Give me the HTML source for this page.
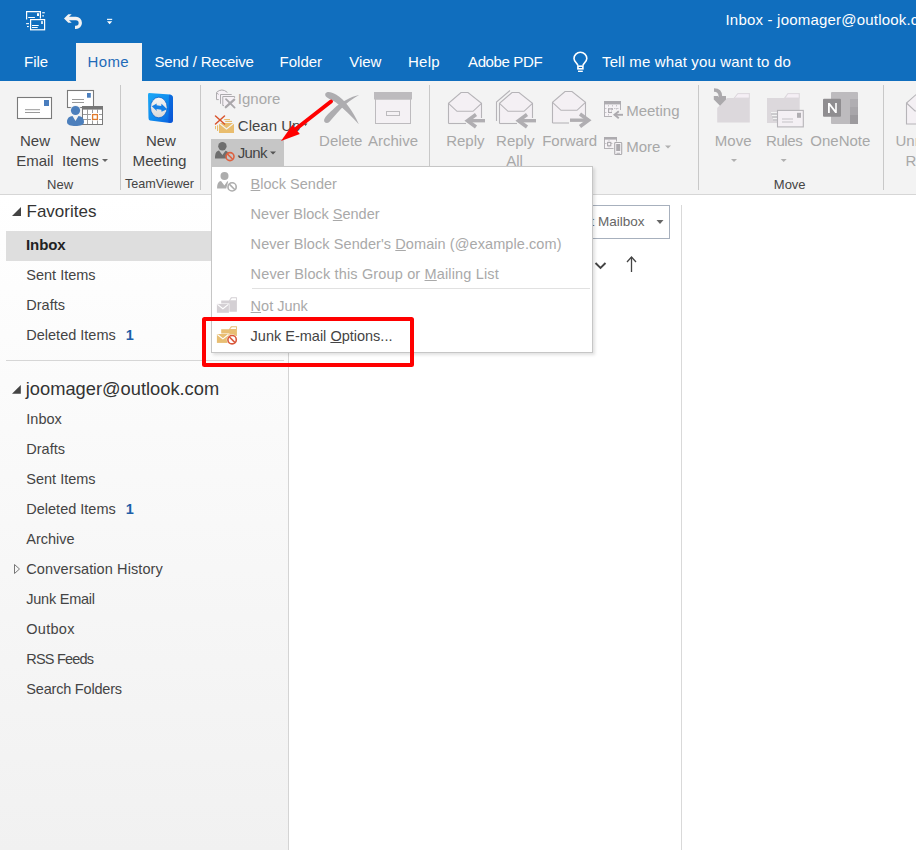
<!DOCTYPE html>
<html><head><meta charset="utf-8">
<style>
*{margin:0;padding:0;box-sizing:border-box}
html,body{width:916px;height:850px;overflow:hidden;background:#fff;font-family:"Liberation Sans",sans-serif}
.a{position:absolute}
.t{position:absolute;white-space:nowrap;line-height:1}
#title{left:0;top:0;width:916px;height:81px;background:#106EBE}
.tab{color:#fff;font-size:15px}
.rb{font-size:15px;color:#444}
.dis{color:#A8A8A8}
.sep{position:absolute;width:1px;background:#C8C8C8}
.side{font-size:14.5px;color:#444}
.menu{font-size:14.5px;color:#A9A9A9}
u{text-decoration:underline;text-decoration-thickness:1px;text-underline-offset:1px}
</style></head><body>
<div id="title" class="a"></div>
<!-- Home tab -->
<div class="a" style="left:76px;top:43px;width:66px;height:38px;background:#F3F3F3"></div>
<div class="t" style="left:725.5px;top:12px;font-size:15px;color:#fff;letter-spacing:0.2px">Inbox - joomager@outlook.com</div>
<div class="t tab" style="left:24px;top:54.2px">File</div>
<div class="t tab" style="left:87.6px;top:54.2px;color:#1F6BB8;letter-spacing:0.35px">Home</div>
<div class="t tab" style="left:154.4px;top:54.2px;letter-spacing:-0.17px">Send / Receive</div>
<div class="t tab" style="left:279.6px;top:54.2px">Folder</div>
<div class="t tab" style="left:349.2px;top:54.2px">View</div>
<div class="t tab" style="left:408px;top:54.2px;letter-spacing:0.25px">Help</div>
<div class="t tab" style="left:468px;top:54.2px;letter-spacing:-0.37px">Adobe PDF</div>
<div class="t tab" style="left:602px;top:54.2px;letter-spacing:0.14px">Tell me what you want to do</div>

<!-- Ribbon -->
<div class="a" style="left:0;top:81px;width:916px;height:114px;background:#F3F3F3;border-bottom:1px solid #D6D6D6"></div>
<div class="sep" style="left:120px;top:85px;height:105px"></div>
<div class="sep" style="left:200px;top:85px;height:105px"></div>
<div class="sep" style="left:429px;top:85px;height:105px"></div>
<div class="sep" style="left:698px;top:85px;height:105px"></div>
<div class="sep" style="left:883px;top:85px;height:105px"></div>

<div class="t rb" style="left:20.0px;top:133.3px">New</div>
<div class="t rb" style="left:16.2px;top:153.0px">Email</div>
<div class="t rb" style="left:69.9px;top:133.3px">New</div>
<div class="t rb" style="left:62.0px;top:153.0px">Items</div>
<div class="t rb" style="left:47.1px;top:177.6px;font-size:13px">New</div>
<div class="t rb" style="left:145.9px;top:133.3px">New</div>
<div class="t rb" style="left:132.5px;top:152.8px;font-size:15.2px">Meeting</div>
<div class="t rb" style="left:125.0px;top:177.6px;font-size:12.6px">TeamViewer</div>

<div class="t rb dis" style="left:237.8px;top:90.8px">Ignore</div>
<div class="t rb" style="left:237.8px;top:117.9px">Clean Up</div>
<div class="a" style="left:211px;top:139px;width:73px;height:27px;background:#C6C6C6"></div>
<div class="t rb" style="left:237.8px;top:145.0px;letter-spacing:-0.7px">Junk</div>
<div class="t rb dis" style="left:319.1px;top:133.3px">Delete</div>
<div class="t rb dis" style="left:368.0px;top:133.3px">Archive</div>
<div class="t rb dis" style="left:446.2px;top:133.3px">Reply</div>
<div class="t rb dis" style="left:496.1px;top:133.3px">Reply</div>
<div class="t rb dis" style="left:506.2px;top:153.0px">All</div>
<div class="t rb dis" style="left:542.2px;top:133.3px">Forward</div>
<div class="t rb dis" style="left:626.2px;top:102.6px">Meeting</div>
<div class="t rb dis" style="left:626.2px;top:138.7px">More</div>
<div class="t rb dis" style="left:714.8px;top:133.3px">Move</div>
<div class="t rb dis" style="left:766.0px;top:133.3px;letter-spacing:-0.4px">Rules</div>
<div class="t rb dis" style="left:810.3px;top:133.3px">OneNote</div>
<div class="t rb" style="left:773.8px;top:177.7px;font-size:13px">Move</div>
<div class="t rb dis" style="left:895.5px;top:133.3px">Unread/</div>
<div class="t rb dis" style="left:905.5px;top:153.3px">Read</div>


<!-- ICONS -->
<svg class="a" style="left:0;top:0" width="916" height="200">
 <!-- QAT send/receive -->
 <g fill="none" stroke="#fff" stroke-width="1.2">
  <polyline points="26.6,19.5 26.6,11.6 40.4,11.6 40.4,18.6"/>
  <rect x="30.6" y="19.6" width="14" height="10.2"/>
 </g>
 <g fill="#fff">
  <rect x="37" y="13.2" width="2" height="2.8"/>
  <rect x="28.2" y="17" width="6.7" height="1"/>
  <rect x="42.2" y="12.2" width="2.6" height="1.1"/>
  <rect x="42.2" y="15.3" width="1.8" height="1.1"/>
  <rect x="41.2" y="21.1" width="1.6" height="2.9"/>
  <rect x="32" y="25" width="6.7" height="1"/>
  <rect x="32" y="27" width="5.7" height="1"/>
  <rect x="26.1" y="23.1" width="2.9" height="1.1"/>
  <rect x="27" y="26" width="1.8" height="1.1"/>
 </g>
 <!-- undo -->
 <path d="M68.5,18.5 H75.9 A4.4,4.4 0 0 1 75.9,27.3 H75" fill="none" stroke="#F2F2F2" stroke-width="3.3"/>
 <polygon points="64,18.5 68.3,14.2 71.7,14.2 68.9,17 70,17 70,20 68.9,20 71.7,22.8 68.3,22.8" fill="#F2F2F2"/>
 <!-- customize -->
 <rect x="107" y="18.8" width="5.2" height="1.1" fill="#fff"/>
 <polygon points="107,21.3 112.2,21.3 109.6,24.3" fill="#fff"/>
 <!-- lightbulb -->
 <g fill="none" stroke="#fff" stroke-width="1.6">
  <path d="M577.9,65.6 C577.6,63.2 574,61.8 574,58.6 A6.4,6.4 0 0 1 586.8,58.6 C586.8,61.8 583.2,63.2 582.9,65.6"/>
 </g>
 <rect x="577.1" y="65.4" width="6.6" height="4.2" fill="#fff"/>
 <rect x="578.8" y="67" width="3.3" height="1" fill="#106EBE"/>
 <rect x="578" y="70.6" width="4.8" height="1.4" fill="#fff"/>

 <!-- New Email -->
 <rect x="17.5" y="97.5" width="34" height="21" fill="#fff" stroke="#7A7A7A" stroke-width="1.1"/>
 <rect x="44" y="100" width="5" height="6" fill="#4A7EBE"/>
 <rect x="25" y="109.2" width="15" height="1" fill="#9A9A9A"/>
 <rect x="25" y="112" width="15" height="1" fill="#9A9A9A"/>
 <!-- New Items -->
 <rect x="67.5" y="90.5" width="26" height="17" fill="#fff" stroke="#7A7A7A" stroke-width="1.1"/>
 <rect x="87" y="93" width="3.8" height="4.7" fill="#4A7EBE"/>
 <rect x="72" y="99" width="12" height="1" fill="#9A9A9A"/>
 <rect x="72" y="102" width="12" height="1" fill="#9A9A9A"/>
 <rect x="82.5" y="106.5" width="20" height="18" fill="#fff" stroke="#7A7A7A" stroke-width="1"/>
 <rect x="82" y="106" width="21" height="3.6" fill="#777"/>
 <g stroke="#9C9C9C" stroke-width="1">
  <line x1="87.5" y1="109" x2="87.5" y2="124"/><line x1="92.5" y1="109" x2="92.5" y2="113"/><line x1="92.5" y1="120.5" x2="92.5" y2="124"/><line x1="97.5" y1="109" x2="97.5" y2="113"/><line x1="97.5" y1="120.5" x2="97.5" y2="124"/>
  <line x1="83" y1="114.5" x2="91" y2="114.5"/><line x1="99" y1="114.5" x2="102" y2="114.5"/><line x1="83" y1="119.5" x2="91" y2="119.5"/><line x1="99" y1="119.5" x2="102" y2="119.5"/>
 </g>
 <rect x="92.6" y="114.6" width="4.8" height="4.8" fill="#fff" stroke="#E07B2C" stroke-width="1.3"/>
 <circle cx="75.5" cy="110.5" r="5.6" fill="#F3F3F3"/>
 <circle cx="75.5" cy="110.5" r="4.6" fill="#4C7FBC"/>
 <path d="M67,122 C67,118 69.5,116.3 72.5,116 L75.5,121 L78.5,116 C81.5,116.3 84,118 84,122 C84,125 80,126 75.5,126 C71,126 67,125 67,122 Z" fill="#4C7FBC"/>
 <!-- TeamViewer -->
 <defs>
  <linearGradient id="tvg" x1="0" y1="0" x2="1" y2="1"><stop offset="0" stop-color="#1AA8F6"/><stop offset="0.6" stop-color="#0E86EC"/><stop offset="1" stop-color="#0A5ADC"/></linearGradient>
  <linearGradient id="tvc" x1="0" y1="0" x2="0" y2="1"><stop offset="0" stop-color="#F6F6F6"/><stop offset="1" stop-color="#D9D9D9"/></linearGradient>
 </defs>
 <path d="M149,93 L170,94.5 Q173,95 173,98 L173,120 Q173,123 170,123 L150,120.5 Q148.5,120 148.5,118 L148,95 Q148,93 149,93 Z" fill="url(#tvg)"/>
 <path d="M169.5,94.5 Q173,95 173,98 L173,120 Q173,123 170,123 L168.5,122.5 L169,96 Z" fill="#0A4FD0" opacity="0.55"/>
 <ellipse cx="158.8" cy="107.5" rx="8.3" ry="10.3" fill="url(#tvc)" stroke="#0B5CC8" stroke-width="0.7"/>
 <polygon points="151.8,106.3 156.8,103.4 156.5,105.3 161.2,106 161.5,103.8 167.2,109.2 161.5,111.8 161.3,109.8 156.5,109 156.8,111" fill="#1680E6"/>
  <!-- Ignore -->
 <path d="M216.5,99.6 V92.4 Q221.8,87.6 227.4,92.4 L227.4,99.6 Z" fill="#F6F1F6"/>
 <rect x="220.5" y="94.5" width="11.2" height="9.3" fill="#F6F1F6"/>
 <rect x="222.8" y="96.5" width="11.8" height="9.2" fill="#F6F1F6"/>
 <g fill="none" stroke="#ADABAE" stroke-width="1">
  <path d="M218.8,99.6 H216.5 V92.4 Q221.8,87.6 227.4,92.4"/>
  <path d="M217.3,93 L218.4,94.6"/>
  <path d="M220.5,103.8 V94.5 H231.7"/>
  <path d="M224,105.6 H222.8 V96.5 H234.6 V97.8"/>
 </g>
 <path d="M226,99.2 L234.6,107.6" stroke="#A9A7AA" stroke-width="1.8" stroke-linecap="round"/>
 <path d="M234.2,99.7 L225.8,107.2" stroke="#A9A7AA" stroke-width="2.3" stroke-linecap="round"/>
 <!-- Clean Up -->
 <rect x="219" y="123" width="15" height="10" fill="#E9BD6E"/>
 <polyline points="219,123 226.5,129 234,123" fill="none" stroke="#F3F3F3" stroke-width="1.1"/>
 <rect x="224.2" y="119" width="5.8" height="1.1" fill="#E9BD6E"/>
 <rect x="225.2" y="120.9" width="6.8" height="1.1" fill="#E9BD6E"/>
 <rect x="215" y="126" width="1" height="3.2" fill="#E9BD6E"/>
 <rect x="217" y="125.3" width="1.1" height="5.7" fill="#E9BD6E"/>
 <g stroke="#D9532C" stroke-width="1.5" stroke-linecap="round">
  <line x1="215.5" y1="116" x2="224.5" y2="124"/><line x1="224.5" y1="116" x2="215.5" y2="124"/>
 </g>
 <!-- Junk -->
 <circle cx="222.4" cy="146.2" r="4.2" fill="#6E6E6E"/>
 <path d="M215,158.5 C215,153 216.5,151 219,150.6 L222.4,155 L225.5,150.8 C226.8,151 227.8,151.8 228,152.5 L226,158.5 Z" fill="#6E6E6E"/>
 <circle cx="230" cy="156.6" r="4" fill="none" stroke="#DE6240" stroke-width="1.6"/>
 <line x1="227.3" y1="153.9" x2="232.7" y2="159.3" stroke="#DE6240" stroke-width="1.6"/>
 <!-- arrows -->
 <polygon points="102,159 108,159 105,162" fill="#666"/>
 <polygon points="303.5,123.5 307.5,123.5 305.5,126" fill="#555"/>
 <polygon points="270,151.5 276,151.5 273,154.5" fill="#555"/>
 <polygon points="665,145.5 671,145.5 668,148.5" fill="#B0B0B0"/>
 <polygon points="731,159 737,159 734,162" fill="#B0B0B0"/>
 <polygon points="780.7,159 786.7,159 783.7,162" fill="#B0B0B0"/>

 <!-- Delete -->
 <path d="M325.3,93.8 C326.5,91 331,91.5 336,94.5 C345,100 353,111 358.8,124.2 C351,115.5 343,108 336,102.5 C331,99.2 324,97.5 325.3,93.8 Z" fill="#AEADB0"/>
 <path d="M359.2,95 C351,96.5 341,102 334,108.5 C330,112.2 325.5,116 324.2,119.5 C323.2,122.8 327.2,124.2 329.3,122 C334,116.5 339.5,110 346,104 C350,100.5 354.5,97.5 359.2,95 Z" fill="#AEADB0"/>
 <!-- Archive -->
 <rect x="375.5" y="99" width="35" height="24.5" fill="#F4F1F4" stroke="#BDBBBE" stroke-width="1"/>
 <rect x="374" y="92" width="38" height="7.5" fill="#BDBBBE"/>
 <rect x="386.5" y="111.5" width="13" height="4" fill="none" stroke="#BDBBBE" stroke-width="1"/>

 <!-- Reply -->
 <g fill="#F4F0F4" stroke="#B6B4B8" stroke-width="1.1">
  <path d="M448.5,123.5 V103.3 L461,92.5 H468 L481.5,103.3 V118"/>
  <path d="M448.5,123.5 H466"/>
  <path d="M448.5,103.3 L457,111.3 H473 L481.5,103.3" fill="none"/>
 </g>
 <g fill="none" stroke="#B0AEB2" stroke-linecap="butt">
  <polyline points="476,114.5 467.5,120.7 476,127" stroke-width="3.6"/>
  <line x1="467" y1="120.7" x2="485" y2="120.7" stroke-width="3.4"/>
 </g>
 <!-- Reply All -->
 <g fill="#F4F0F4" stroke="#B6B4B8" stroke-width="1.1">
  <path d="M496.5,121 V102 L510,90.5" fill="none"/>
  <path d="M499.5,123.5 V103.3 L512,92.5 H519 L532.5,103.3 V118"/>
  <path d="M499.5,123.5 H517"/>
  <path d="M499.5,103.3 L508,111.3 H524 L532.5,103.3" fill="none"/>
 </g>
 <g fill="none" stroke="#B0AEB2">
  <polyline points="527,114.5 518.5,120.7 527,127" stroke-width="3.6"/>
  <line x1="518" y1="120.7" x2="536" y2="120.7" stroke-width="3.4"/>
 </g>
 <!-- Forward -->
 <g fill="#F4F0F4" stroke="#B6B4B8" stroke-width="1.1">
  <path d="M552.5,123 V102.3 L565,91.5 H572 L585.5,102.3 V117"/>
  <path d="M552.5,123 H569"/>
  <path d="M552.5,102.3 L561,110.3 H577 L585.5,102.3" fill="none"/>
 </g>
 <g fill="none" stroke="#B0AEB2">
  <polyline points="580,114 588.5,120.2 580,126.5" stroke-width="3.6"/>
  <line x1="570" y1="120.2" x2="589" y2="120.2" stroke-width="3.4"/>
 </g>
 <!-- Meeting small -->
 <rect x="604.5" y="101.5" width="16" height="15" fill="#F6F3F6" stroke="#B4B2B6" stroke-width="1"/>
 <rect x="604" y="101" width="17" height="3.4" fill="#ADABAF"/>
 <g stroke="#C9C7CB" stroke-width="1" stroke-dasharray="1.5 1.5" fill="none">
  <line x1="608.5" y1="105" x2="608.5" y2="116"/><line x1="612.5" y1="105" x2="612.5" y2="116"/><line x1="616.5" y1="105" x2="616.5" y2="112"/>
  <line x1="605" y1="108.5" x2="620" y2="108.5"/><line x1="605" y1="112.5" x2="613" y2="112.5"/>
 </g>
 <rect x="608.6" y="108.9" width="3.6" height="3.6" fill="#F6F3F6" stroke="#ABA9AD" stroke-width="1.1"/>
 <rect x="612" y="110" width="11" height="10" fill="#F3F3F3"/>
 <polyline points="618.8,111.3 614.5,114.8 618.8,118.3" fill="none" stroke="#ACAAAE" stroke-width="1.9"/>
 <line x1="614.5" y1="114.8" x2="623" y2="114.8" stroke="#ACAAAE" stroke-width="1.9"/>
 <!-- More small -->
 <rect x="604.5" y="137.5" width="12" height="11" fill="#F6F3F6" stroke="#B4B2B6" stroke-width="1"/>
 <rect x="604" y="137" width="13" height="2.6" fill="#ADABAF"/>
 <g stroke="#C9C7CB" stroke-width="1" stroke-dasharray="1.5 1.5" fill="none">
  <line x1="605" y1="143.5" x2="616" y2="143.5"/><line x1="609" y1="140" x2="609" y2="148"/>
 </g>
 <rect x="607.6" y="142.4" width="3.2" height="3.4" fill="#F6F3F6" stroke="#ABA9AD" stroke-width="1.1"/>
 <rect x="613.5" y="141.5" width="9" height="14" fill="#F3F3F3"/>
 <rect x="614.7" y="142.5" width="7" height="12" rx="0.8" fill="#F6F3F6" stroke="#ACAAAE" stroke-width="1.1"/>
 <rect x="616.2" y="144" width="4" height="7" fill="#ACAAAE"/>
 <rect x="616.5" y="152.8" width="3.5" height="0.9" fill="#ACAAAE"/>
 <!-- Move -->
 <path d="M717.2,108 L727,98.1 H733.7 L737.8,93.1 H749.8 V122.6 H717.2 Z" fill="#DCD8DC"/>
 <path d="M734.3,98.1 L738,93.6 H749.3 V98.1 Z" fill="#F5EFF5" stroke="#DCD8DC" stroke-width="0.9"/>
 <path d="M714,90 C718.5,90 720.4,92.5 720.4,96.5 V100" fill="none" stroke="#ABA9AC" stroke-width="3.6"/>
 <polygon points="713.8,96 717.8,96 720.2,98.8 722.2,96 726,96 726,99.5 720,105.8 713.8,99.5" fill="#ABA9AC"/>
 <!-- Rules -->
 <path d="M767,98 H784 L787.8,93.1 H799.7 V123 H767 Z" fill="#DCD8DC"/>
 <path d="M785,98 L788,93.6 H799.2 V98 Z" fill="#F5EFF5" stroke="#DCD8DC" stroke-width="0.9"/>
 <g fill="#F3F3F3"><rect x="771" y="112" width="6" height="1.2"/><rect x="772" y="115" width="5" height="1.2"/><rect x="773" y="118" width="4" height="1.2"/></g>
 <g fill="#C8C6CA"><rect x="771" y="113.2" width="6" height="1.6"/><rect x="772" y="116.2" width="5" height="1.6"/><rect x="773" y="119.2" width="4" height="1.6"/></g>
 <rect x="777.5" y="110.4" width="25.8" height="16.5" fill="#F4F0F4" stroke="#B6B4B8" stroke-width="1.1"/>
 <rect x="797" y="112.8" width="4" height="5" fill="#B0AEB2"/>
 <rect x="782" y="118.5" width="11" height="1" fill="#C4C2C6"/>
 <rect x="782" y="121.5" width="11" height="1" fill="#C4C2C6"/>
 <!-- OneNote -->
 <rect x="831" y="92" width="27" height="32" rx="1" fill="#BDBBBE"/>
 <rect x="850" y="99" width="8" height="8" fill="#B0AEB2"/>
 <rect x="850" y="107" width="8" height="8" fill="#A8A6AA"/>
 <rect x="850" y="115" width="8" height="9" fill="#9C9A9E"/>
 <rect x="823" y="98.8" width="18" height="18" rx="1" fill="#8F8D90"/>
 <path d="M828,113 V103 H829.8 L835.2,110 V103 H836.8 V113 H835.2 L829.8,106 V113 Z" fill="#fff"/>
 <!-- Unread partial -->
 <g fill="#F4F0F4" stroke="#B6B4B8" stroke-width="1.1">
  <path d="M906.5,124 V103 L919,92 H930 V124 Z"/>
  <path d="M906.5,103 L915,111 H930" fill="none"/>
 </g>
</svg>

<!-- Sidebar -->
<div class="a" style="left:0;top:195px;width:289px;height:655px;background:linear-gradient(#fff,#F1F1F1);border-right:1px solid #D4D4D4"></div>
<div class="a" style="left:6px;top:231px;width:282px;height:30px;background:#DEDEDE"></div>
<div class="t" style="left:26.5px;top:203.2px;font-size:17px;color:#333">Favorites</div>
<div class="t side" style="left:26px;top:237.2px;font-weight:bold;color:#222;font-size:15px;letter-spacing:-0.1px">Inbox</div>
<div class="t side" style="left:26.3px;top:267.7px">Sent Items</div>
<div class="t side" style="left:26.3px;top:297.7px">Drafts</div>
<div class="t side" style="left:26.3px;top:327.7px">Deleted Items <b style="color:#1E5FA8;margin-left:6px">1</b></div>
<div class="a" style="left:6px;top:360px;width:278px;height:1px;background:#D6D6D6"></div>
<div class="t" style="left:25.8px;top:379.8px;font-size:18.3px;color:#333">joomager@outlook.com</div>
<div class="t side" style="left:26.3px;top:411.7px">Inbox</div>
<div class="t side" style="left:26.3px;top:441.7px">Drafts</div>
<div class="t side" style="left:26.3px;top:471.7px">Sent Items</div>
<div class="t side" style="left:26.3px;top:501.7px">Deleted Items <b style="color:#1E5FA8;margin-left:6px">1</b></div>
<div class="t side" style="left:26.3px;top:531.7px">Archive</div>
<div class="t side" style="left:26.3px;top:561.7px;letter-spacing:0.1px">Conversation History</div>
<div class="t side" style="left:26.3px;top:591.7px;letter-spacing:-0.25px">Junk Email</div>
<div class="t side" style="left:26.3px;top:621.7px;letter-spacing:0.27px">Outbox</div>
<div class="t side" style="left:26.3px;top:651.7px;letter-spacing:-0.8px">RSS Feeds</div>
<div class="t side" style="left:26.3px;top:681.7px;letter-spacing:-0.2px">Search Folders</div>
<svg class="a" style="left:0;top:194px" width="30" height="400">
 <polygon points="12,22 21,13 21,22" fill="#444"/>
 <polygon points="12,199.8 20.8,191 20.8,199.8" fill="#444"/>
 <polygon points="14.5,370.5 19.5,375 14.5,379.5" fill="none" stroke="#777" stroke-width="1"/>
</svg>

<!-- middle -->
<div class="a" style="left:681px;top:205px;width:1px;height:645px;background:#D9D9D9"></div>
<div class="a" style="left:480px;top:205px;width:190px;height:34px;border:1px solid #A7B0BD;background:#fff"></div>
<div class="t" style="right:271.4px;top:215.2px;font-size:13.5px;color:#666">Current Mailbox</div>
<svg class="a" style="left:585px;top:195px" width="90" height="80">
 <polygon points="71.5,25 78.5,25 75,29" fill="#666"/>
 <polyline points="10.5,68 15.5,73 20.5,68" fill="none" stroke="#444" stroke-width="1.9"/>
 <line x1="46.5" y1="62" x2="46.5" y2="77" stroke="#444" stroke-width="1.3"/>
 <polyline points="42,67 46.5,62 51,67" fill="none" stroke="#444" stroke-width="1.3"/>
</svg>

<!-- menu -->
<div class="a" style="left:211px;top:166px;width:382px;height:187px;background:#fff;border:1px solid #C6C6C6;box-shadow:2px 2px 3px rgba(0,0,0,0.12)"></div>
<div class="t menu" style="left:250.6px;top:176.8px"><u>B</u>lock Sender</div>
<div class="t menu" style="left:250.6px;top:207px">Never Block <u>S</u>ender</div>
<div class="t menu" style="left:250.6px;top:236.7px;letter-spacing:0.08px">Never Block Sender's <u>D</u>omain (@example.com)</div>
<div class="t menu" style="left:250.6px;top:266.7px;letter-spacing:0.15px">Never Block this Group or <u>M</u>ailing List</div>
<div class="a" style="left:252px;top:288px;width:338px;height:1px;background:#E1E1E1"></div>
<div class="t menu" style="left:250.6px;top:298.7px"><u>N</u>ot Junk</div>
<div class="t menu" style="left:250.6px;top:329.2px;color:#444">Junk E-mail <u>O</u>ptions...</div>


<svg class="a" style="left:0;top:0" width="600" height="360">
 <circle cx="224.5" cy="175.9" r="4" fill="#ADADAD"/>
 <path d="M217.1,188.5 C217.1,183.5 218.5,181.3 221,181 L224.4,185.5 L227.3,181.2 L228.2,181.6 L226.2,188.5 Z" fill="#ADADAD"/>
 <circle cx="232.1" cy="186.9" r="4.1" fill="#fff" stroke="#ADADAD" stroke-width="1.6"/>
 <line x1="229.3" y1="184.1" x2="234.9" y2="189.7" stroke="#ADADAD" stroke-width="1.6"/>
 <!-- not junk -->
 <path d="M221.2,300.5 H229 L231,297.2 H236.9 V311.8 H221.2 Z" fill="#D4D0D4"/>
 <path d="M230.2,300.2 L231.8,298.2 H236 V300.2 Z" fill="#fff"/>
 <rect x="216.4" y="303.4" width="13" height="9.9" fill="#fff"/>
 <rect x="216.9" y="303.9" width="12" height="8.9" fill="#D4D0D4"/>
 <polyline points="217.4,304.4 222.9,308.8 228.4,304.4" fill="none" stroke="#fff" stroke-width="1.1"/>
 <!-- junk options -->
 <path d="M221.2,329.3 H229 L231,326.2 H236.9 V336 H221.2 Z" fill="#E8BE73"/>
 <path d="M230.2,329.1 L231.8,327.2 H236 V329.1 Z" fill="#fff"/>
 <rect x="216.4" y="333.5" width="13" height="9.9" fill="#fff"/>
 <rect x="216.9" y="334" width="12" height="8.9" fill="#E8BE73"/>
 <polyline points="217.4,334.5 222.9,338.9 228.4,334.5" fill="none" stroke="#fff" stroke-width="1.1"/>
 <circle cx="232.1" cy="339.7" r="5.4" fill="#fff"/>
 <circle cx="232.1" cy="339.7" r="4.2" fill="#fff" stroke="#D9573A" stroke-width="1.6"/>
 <line x1="229.2" y1="336.8" x2="235" y2="342.6" stroke="#D9573A" stroke-width="1.6"/>
</svg>

<!-- red annotations -->
<div class="a" style="left:202.4px;top:316.6px;width:211.2px;height:50px;border:4.4px solid #FF0000;border-radius:2.5px"></div>
<svg class="a" style="left:0;top:0" width="916" height="850">
 <line x1="331" y1="101.5" x2="292" y2="132" stroke="#FF0000" stroke-width="4" stroke-linecap="round"/>
 <polygon points="281,141 292.5,124.8 299.8,133.9" fill="#FF0000"/>
</svg>
</body></html>
